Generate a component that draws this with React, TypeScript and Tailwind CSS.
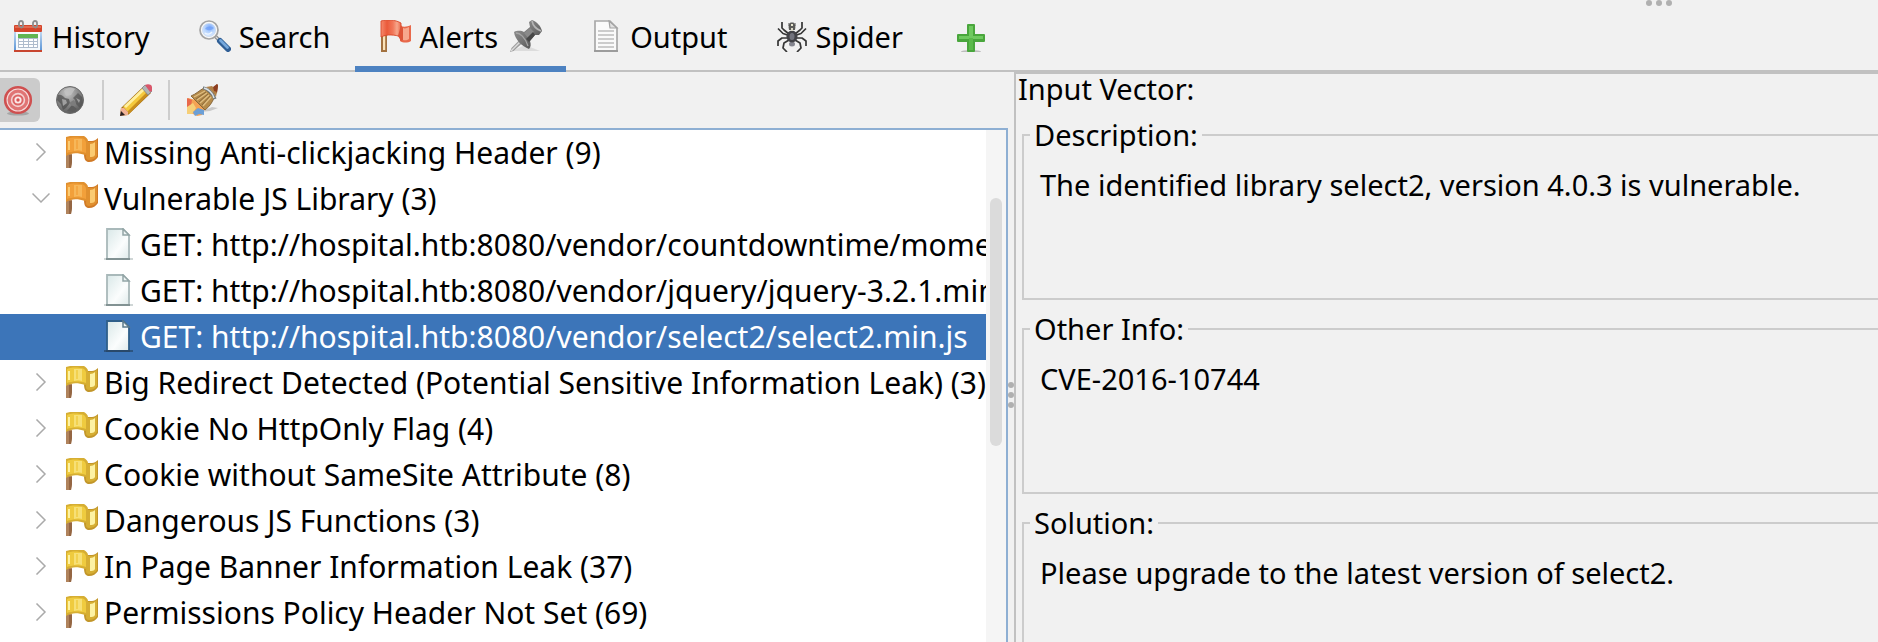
import { useState } from "react";
import type { ReactNode } from "react";

function Icon({ children }: { children: ReactNode }) {
  return (
    <svg viewBox="0 0 32 32" className="block size-8 shrink-0" aria-hidden="true">
      {children}
    </svg>
  );
}

function CalendarIcon() {
  return (
    <Icon>
      <defs>
        <linearGradient id="cal" x1="0" y1="0" x2="0" y2="1">
          <stop offset="0" stopColor="#c5dcf3" />
          <stop offset="1" stopColor="#5f97d6" />
        </linearGradient>
      </defs>
      <rect x="2" y="11" width="28" height="19" fill="url(#cal)" />
      <rect x="4" y="11" width="24" height="19" fill="#f6fafd" />
      <rect x="2" y="5" width="28" height="7" rx="1" fill="#d5452a" />
      <rect x="3" y="6" width="26" height="2" fill="#e2694f" />
      <rect x="2" y="30" width="28" height="2" fill="#c84630" />
      <rect x="6" y="14" width="20" height="4" fill="#62b552" />
      <rect x="6" y="18" width="20" height="10" fill="#aebccd" />
      <g fill="#fff">
        <rect x="7" y="19" width="4" height="2" />
        <rect x="12" y="19" width="4" height="2" />
        <rect x="17" y="19" width="4" height="2" />
        <rect x="22" y="19" width="3" height="2" />
        <rect x="7" y="22" width="4" height="2" />
        <rect x="12" y="22" width="4" height="2" />
        <rect x="17" y="22" width="4" height="2" />
        <rect x="22" y="22" width="3" height="2" />
        <rect x="7" y="25" width="4" height="2" />
        <rect x="12" y="25" width="4" height="2" />
        <rect x="17" y="25" width="4" height="2" />
        <rect x="22" y="25" width="3" height="2" />
      </g>
      <g fill="none" stroke="#8d8d8d" strokeWidth="1.8">
        <path d="M7 6.500V3a2 2 0 0 1 4 0v3a1.500 1.500 0 0 1-3 0" />
        <path d="M21 6.500V3a2 2 0 0 1 4 0v3a1.500 1.500 0 0 1-3 0" />
      </g>
    </Icon>
  );
}

function SearchIcon() {
  return (
    <Icon>
      <defs>
        <radialGradient id="lens" cx="0.55" cy="0.3" r="0.7">
          <stop offset="0" stopColor="#7fabfa" />
          <stop offset="0.5" stopColor="#b4d2fd" />
          <stop offset="1" stopColor="#dcebff" />
        </radialGradient>
      </defs>
      <path d="M16 16l4 4" stroke="#8b8b8b" strokeWidth="3.500" />
      <path d="M16 16l3.500 3.500" stroke="#d8d8d8" strokeWidth="1.200" />
      <path d="M21 21l8 8" stroke="#2f5e95" strokeWidth="6" strokeLinecap="round" />
      <path d="M21.500 20.500l7 7" stroke="#76a8dc" strokeWidth="2.800" strokeLinecap="round" />
      <circle cx="10" cy="10" r="9" fill="#f8f8f8" stroke="#a3a3a3" strokeWidth="1.700" />
      <circle cx="10" cy="10" r="6.600" fill="url(#lens)" stroke="#c3d4ec" strokeWidth="0.600" />
      <path d="M6 9c2-3 6-3 9-1-2 1-3 4-9 1z" fill="#6c9df6" opacity="0.700" />
      <path d="M6 13c2 1.500 5 1.500 7-1" stroke="#eef6ff" strokeWidth="1.500" fill="none" />
    </Icon>
  );
}

function RedFlagIcon() {
  return (
    <Icon>
      <defs>
        <linearGradient id="rf" x1="0" y1="0" x2="1" y2="0">
          <stop offset="0" stopColor="#f58a6c" />
          <stop offset="0.300" stopColor="#ea5a3a" />
          <stop offset="0.600" stopColor="#f1785a" />
          <stop offset="0.800" stopColor="#f6a78c" />
          <stop offset="1" stopColor="#ea6a4c" />
        </linearGradient>
      </defs>
      <path d="M2 13h6v19H2z" fill="#a2713f" />
      <path d="M4 16h2.200v14H4z" fill="#fbe3b8" />
      <path d="M21 6c4 1 7 1 11-1v16c-3 2-8 2-11 0z" fill="#e8694b" />
      <path d="M24 8c2 1 4 0 6-1v12c-2 1.500-4 1.500-6 1z" fill="#f7a88e" />
      <path d="M2 1C8-0.500 16-0.500 22 3v14C16 14.500 8 14 2 17z" fill="url(#rf)" stroke="#d9492a" strokeWidth="0.900" />
      <path d="M19 16l3 5 2-1V8l-2-3z" fill="#dd5438" />
    </Icon>
  );
}

function PinIcon() {
  return (
    <Icon>
      <defs>
        <linearGradient id="pin" x1="0" y1="0" x2="1" y2="1">
          <stop offset="0" stopColor="#9a9a9a" />
          <stop offset="0.500" stopColor="#757575" />
          <stop offset="1" stopColor="#404040" />
        </linearGradient>
      </defs>
      <path d="M2 31l13-6 15 6H2z" fill="#cfcfcf" opacity="0.600" />
      <path d="M0 32l1.500-4 8-8 3 3-9 8z" fill="#9b9b9b" />
      <path d="M1 31l9-9" stroke="#dcdcdc" strokeWidth="1.400" />
      <path d="M4 12c4-2 8-1 10 0l6-5-1-5 3-2c5 2 9 6 10 11l-3 4-4 0-5 6c1 3 1 6-1 8C12 26 5 20 4 12z" fill="url(#pin)" />
      <path d="M14 13l6-5 4 4-6 6z" fill="#8a8a8a" />
      <path d="M16 19l7-7 2 3-6 7z" fill="#474747" />
      <path d="M6 13c4 0 9 4 12 13" stroke="#a5a5a5" strokeWidth="1.300" fill="none" />
      <path d="M22 1c1 5 4 8 9 10" stroke="#b5b5b5" strokeWidth="1.600" fill="none" />
    </Icon>
  );
}

function OutputIcon() {
  return (
    <Icon>
      <path d="M5 1h15l7 7v23H5z" fill="#fafafa" stroke="#a9a9a9" strokeWidth="1.700" />
      <path d="M4 31h24" stroke="#979797" strokeWidth="1.700" />
      <path d="M19 1l1 7h7z" fill="#e2e2e2" stroke="#a3a3a3" strokeWidth="1.200" />
      <path d="M8 11h16M8 15h16M8 19h16M8 23h16M8 27h16" stroke="#bdbdbd" strokeWidth="1.600" />
    </Icon>
  );
}

function SpiderIcon() {
  return (
    <Icon>
      <g fill="none" stroke="#363636" strokeWidth="1.700" strokeLinejoin="round">
        <path d="M14 14L9 10 7 8V2" />
        <path d="M20 14l5-4 2-2V2" />
        <path d="M14 15.500l-6-2-5-5" />
        <path d="M20 15.500l6-2 5-5" />
        <path d="M14 18H7l-4 3v5" />
        <path d="M20 18h7l4 3v5" />
        <path d="M14 20l-5 3-1 5 4 4" />
        <path d="M20 20l5 3 1 5-4 4" />
      </g>
      <ellipse cx="17" cy="24" rx="3" ry="2.500" fill="#84858f" />
      <ellipse cx="17" cy="16.500" rx="5.500" ry="6" fill="#424247" />
      <ellipse cx="17" cy="16.500" rx="2.500" ry="3.500" fill="#72737d" />
      <path d="M14 10c-1-4 0-6 1.500-7.500h3C20 4 21 6 20 10z" fill="#5b5b58" />
      <rect x="16" y="4" width="2" height="2" fill="#e9e7d2" />
      <rect x="16" y="8" width="2" height="3" fill="#d9d7c5" />
      <path d="M14 3v3M20 3v3" stroke="#555" strokeWidth="1" />
    </Icon>
  );
}

function PlusIcon() {
  return (
    <Icon>
      <ellipse cx="16" cy="31.500" rx="10" ry="1.500" fill="#bdbdbd" />
      <path d="M12 5a1 1 0 0 1 1-1h6a1 1 0 0 1 1 1v9h9a1 1 0 0 1 1 1v6a1 1 0 0 1-1 1h-9v9a1 1 0 0 1-1 1h-6a1 1 0 0 1-1-1v-9H3a1 1 0 0 1-1-1v-6a1 1 0 0 1 1-1h9z" fill="#49a63c" />
      <path d="M14 6h4v10h10v3H4v-3h10z" fill="#6fc95f" />
      <path d="M14 18h4v12h-4z" fill="#5aba4a" />
    </Icon>
  );
}

function TargetIcon() {
  return (
    <Icon>
      <ellipse cx="16" cy="29.500" rx="11" ry="2" fill="#a5a5a5" />
      <circle cx="16" cy="16" r="12.800" fill="#f6dada" stroke="#cf5050" strokeWidth="2.600" />
      <circle cx="16" cy="16" r="8.800" fill="#f4d2d2" stroke="#e07474" strokeWidth="3.200" />
      <circle cx="16" cy="16" r="4.600" fill="#fbe9e9" stroke="#dc6464" strokeWidth="2" />
      <circle cx="16" cy="16" r="1.700" fill="#d95353" />
    </Icon>
  );
}

function GlobeIcon() {
  return (
    <Icon>
      <defs>
        <radialGradient id="globe" cx="0.400" cy="0.250" r="0.750">
          <stop offset="0" stopColor="#c6c6c6" />
          <stop offset="0.550" stopColor="#8a8a8a" />
          <stop offset="1" stopColor="#5c5c5c" />
        </radialGradient>
      </defs>
      <circle cx="16" cy="16" r="13.500" fill="url(#globe)" stroke="#6a6a6a" strokeWidth="1" />
      <path d="M4 11c3-1 5 1 7 3l4 1 1 4-4 5-3 2-2-6-4-4z" fill="#4c4c4c" opacity="0.700" />
      <path d="M19 14l5-5 4 4 1 6-3 5-4-4-1-4z" fill="#525252" opacity="0.700" />
      <path d="M8 15l4 1 1 3-4 3z" fill="#a0a0a0" />
      <path d="M10 7c3-4 8-4 11-2l-4 6-5 1z" fill="#c2c2c2" opacity="0.800" />
      <path d="M13 27l5-6 5 4-4 3z" fill="#5c5c5c" />
      <path d="M22 14l4 2-1 3z" fill="#a0a0a0" />
      <path d="M15 19l5-3 2 4-4 2z" fill="#7c7c7c" />
    </Icon>
  );
}

function PencilIcon() {
  return (
    <Icon>
      <path d="M0 32l1-8L24 2l7 7L8 31z" fill="#a36f19" />
      <path d="M3 23L23 4l5 5L9 29z" fill="#f4c93d" />
      <path d="M4 22L23 4l2 2L6 24z" fill="#fff0a0" />
      <path d="M7 28L27 8l2 2L9 30z" fill="#c98f1e" />
      <path d="M0 32l1-8 3 0 4 4 0 3z" fill="#f1b296" />
      <path d="M0 32l1-5 4 4z" fill="#2b2020" />
      <path d="M22 4l3-3 7 6-4 4z" fill="#b0b5b6" stroke="#808688" strokeWidth="0.800" />
      <path d="M25 1c2-1 4-1 6 0 1 1 2 4 1 6l-2 1z" fill="#d9576b" />
    </Icon>
  );
}

function BroomIcon() {
  return (
    <Icon>
      <path d="M14 28l12-5 6 1-8 3z" fill="#c9c9c9" />
      <path d="M2 14l8 2 9 9-3 6-5 1-8-4-2-3z" fill="#f4a354" />
      <path d="M1 14l5 2-1 6-4 2z" fill="#e9694b" />
      <path d="M1 23l6-4 3 5-4 6H1z" fill="#f6cf78" />
      <path d="M7 28l5-4 6 2v5l-5-1-4 2z" fill="#6c9fd6" />
      <path d="M27 5l4-5 1 1-1 8-4 2z" fill="#92441f" />
      <path d="M5 12c5-2 9-6 13-8l10 10c-2 5-5 9-9 12z" fill="#b58b4b" stroke="#806033" strokeWidth="0.900" />
      <path d="M8 13L19 7M11 16l10-7M14 19l9-8M17 22l8-9" stroke="#dfbd80" strokeWidth="1.300" />
      <path d="M10 15l10-7M13 18l9-8M16 21l8-9" stroke="#856437" strokeWidth="0.800" />
      <path d="M17 4c4 0 10 5 12 11" stroke="#737c80" strokeWidth="3.200" fill="none" />
      <path d="M18 4c4 1 9 5 10 10" stroke="#dfe4e6" strokeWidth="1.400" fill="none" />
      <path d="M20 3l6-1 5 5-1 6c-2-4-6-8-10-10z" fill="#b08047" />
      <path d="M27 3l4-3 1 2-1 6-3-1z" fill="#8d3f20" />
    </Icon>
  );
}

function AlertFlagIcon({ level }: { level: "medium" | "low" }) {
  const c =
    level === "medium"
      ? { edge: "#e0902f", base: "#f2a03a", light: "#fbcb72", dark: "#d07a26" }
      : { edge: "#d6ae33", base: "#efcb3f", light: "#fdf2a4", dark: "#c2962a" };
  return (
    <Icon>
      <path d="M0 18h6v8l-1 6H0z" fill="#b0835c" />
      <path d="M3 19h3v7l-1 6H3z" fill="#946643" />
      <path d="M20 5h6c2 0 4-1 6-3v19c-2 3-5 5-9 5-3 0-5-2-5-8z" fill={c.dark} />
      <path d="M21 6h5c2 0 3-1 5-2v16c-2 3-5 4-8 4-2 0-3-1-3-3z" fill={c.edge} />
      <path d="M24 8c2 0 4-1 5-2v13c-1 2-3 2-5 2z" fill={c.light} />
      <path d="M0 1l4-1h14c2 1 4 3 4 5v13l-3 1c-6-2-11-2-14-1-2 0-3 1-5 2z" fill={c.edge} />
      <path d="M1 3c4-2 12-2 17 0 1 1 2 2 2 4v10c-6-2-14-2-19 0z" fill={c.base} />
      <path d="M8 3h8v12c-3-1-5-1-8 0z" fill={c.light} opacity="0.550" />
      <path d="M2 5h2v9H2z" fill={c.light} />
      <path d="M10 4h2v9h-2z" fill={c.base} opacity="0.700" />
    </Icon>
  );
}

function PageIcon({ selected }: { selected: boolean }) {
  const edge = selected ? "#2f5f8a" : "#a9b9ba";
  return (
    <Icon>
      <defs>
        <linearGradient id="page" x1="0" y1="0" x2="1" y2="1">
          <stop offset="0" stopColor="#d9e8e8" />
          <stop offset="0.600" stopColor="#fbfdfd" />
          <stop offset="1" stopColor="#dfeaea" />
        </linearGradient>
      </defs>
      <path d="M2 31h29" stroke={selected ? "#2c5480" : "#cfd6d6"} strokeWidth="2" />
      <path d="M5 1h16l6 6v24H5z" fill="url(#page)" stroke={edge} strokeWidth="1.800" />
      <path d="M4 31h24" stroke={selected ? "#29496b" : "#829293"} strokeWidth="2" />
      <path d="M21 1v6h6z" fill="#eef4f4" stroke={selected ? "#5c7b8c" : "#93a5a6"} strokeWidth="1.500" />
    </Icon>
  );
}

function Grip({ vertical = false }: { vertical?: boolean }) {
  return (
    <span className={vertical ? "flex flex-col gap-1" : "flex gap-1"}>
      {[0, 1, 2].map((i) => (
        <span key={i} className="size-1.5 rounded-full bg-[#b0b0b0]" />
      ))}
    </span>
  );
}

const tabs = [
  { name: "History", icon: <CalendarIcon />, pad: "pl-3 pr-6" },
  { name: "Search", icon: <SearchIcon />, pad: "px-[25px]" },
  { name: "Alerts", icon: <RedFlagIcon />, pad: "px-6", pinned: true },
  { name: "Output", icon: <OutputIcon />, pad: "px-6" },
  { name: "Spider", icon: <SpiderIcon />, pad: "px-6" },
];

type Alert = { title: string; level: "medium" | "low"; requests?: string[] };

const alerts: Alert[] = [
  { title: "Missing Anti-clickjacking Header (9)", level: "medium" },
  {
    title: "Vulnerable JS Library (3)",
    level: "medium",
    requests: [
      "GET: http://hospital.htb:8080/vendor/countdowntime/moment.min.js",
      "GET: http://hospital.htb:8080/vendor/jquery/jquery-3.2.1.min.js",
      "GET: http://hospital.htb:8080/vendor/select2/select2.min.js",
    ],
  },
  { title: "Big Redirect Detected (Potential Sensitive Information Leak) (3)", level: "low" },
  { title: "Cookie No HttpOnly Flag (4)", level: "low" },
  { title: "Cookie without SameSite Attribute (8)", level: "low" },
  { title: "Dangerous JS Functions (3)", level: "low" },
  { title: "In Page Banner Information Leak (37)", level: "low" },
  { title: "Permissions Policy Header Not Set (69)", level: "low" },
];

const details = [
  { label: "Description:", text: "The identified library select2, version 4.0.3 is vulnerable." },
  { label: "Other Info:", text: "CVE-2016-10744" },
  { label: "Solution:", text: "Please upgrade to the latest version of select2." },
];

function TabBar() {
  const [active, setActive] = useState("Alerts");
  return (
    <header className="flex h-[72px] shrink-0 border-b-2 border-[#c1c1c1]">
      <div role="tablist" className="flex h-[72px]">
        {tabs.map((t) => (
          <button
            key={t.name}
            role="tab"
            aria-selected={active === t.name}
            onClick={() => setActive(t.name)}
            className={`flex items-center gap-2 border-b-6 pt-1.5 whitespace-nowrap ${t.pad} ${
              active === t.name ? "border-[#4d82c1]" : "border-transparent"
            }`}
          >
            {t.icon}
            <span className="pt-0.5">{t.name}</span>
            {t.pinned && (
              <span className="pl-1">
                <PinIcon />
              </span>
            )}
          </button>
        ))}
        <button aria-label="Add tab" className="flex items-center px-7">
          <PlusIcon />
        </button>
      </div>
      <div className="mr-[206px] ml-auto">
        <Grip />
      </div>
    </header>
  );
}

function Toolbar() {
  return (
    <div className="flex h-14 shrink-0 items-center" role="toolbar">
      <button aria-label="Scope" aria-pressed="true" className="rounded-r-md bg-[#cbcbcb] py-1.5 pr-1.5 pl-0.5">
        <TargetIcon />
      </button>
      <button aria-label="Sites" className="ml-2 p-1.5">
        <GlobeIcon />
      </button>
      <span className="mx-2.5 h-10 w-0.5 bg-[#cdcdcd]" />
      <button aria-label="Edit" className="p-1.5">
        <PencilIcon />
      </button>
      <span className="mx-2.5 h-10 w-0.5 bg-[#cdcdcd]" />
      <button aria-label="Clear" className="p-1.5">
        <BroomIcon />
      </button>
    </div>
  );
}

function AlertTree() {
  const [selected, setSelected] = useState(alerts[1].requests![2]);
  return (
    <div className="flex min-h-0 flex-1 border-t-2 border-r-2 border-[#8eafd3] bg-white text-[30px]">
      <ul role="tree" className="min-w-0 flex-1 overflow-hidden">
        {alerts.map((a) => (
          <li key={a.title} role="treeitem" aria-expanded={!!a.requests}>
            <button className="flex h-[46px] w-full items-center gap-1.5 pb-0.5 pl-8 text-left whitespace-nowrap">
              <svg viewBox="0 0 18 18" className="mr-2.5 size-[18px] shrink-0" fill="none" stroke="#aaaaaa" strokeWidth="1.500" aria-hidden="true">
                <path d={a.requests ? "M0.500 4.500L9 13l8.500-8.500" : "M4.500 0.500L13 9l-8.500 8.500"} />
              </svg>
              <AlertFlagIcon level={a.level} />
              <span className="pt-0.5">{a.title}</span>
            </button>
            {a.requests && (
              <ul role="group">
                {a.requests.map((r) => (
                  <li key={r} role="treeitem" aria-selected={r === selected}>
                    <button
                      onClick={() => setSelected(r)}
                      className={`flex h-[46px] w-full items-center gap-1.5 overflow-hidden pb-0.5 pl-[102px] text-left whitespace-nowrap ${
                        r === selected ? "bg-[#3c75b9] text-white" : ""
                      }`}
                    >
                      <PageIcon selected={r === selected} />
                      <span className="pt-0.5">{r}</span>
                    </button>
                  </li>
                ))}
              </ul>
            )}
          </li>
        ))}
      </ul>
      <div className="w-5 shrink-0 bg-[#f5f5f5] px-1 pt-[68px]">
        <div className="h-[248px] rounded-full bg-[#dbdbdb]" />
      </div>
    </div>
  );
}

function DetailPanel() {
  return (
    <section className="min-w-0 border-t-2 border-l-2 border-[#c1c1c1]">
      <p className="mb-3 pl-0.5 leading-[30px]">Input Vector:</p>
      <div className="flex flex-col gap-2.5 pl-1.5">
        {details.map((d) => (
          <fieldset key={d.label} className="h-[184px] min-w-0 border-2 border-r-0 border-[#cccccc]">
            <legend className="ml-1.5 px-1">{d.label}</legend>
            <p className="px-4 pt-3">{d.text}</p>
          </fieldset>
        ))}
      </div>
    </section>
  );
}

export default function App() {
  return (
    <main className="flex h-screen flex-col overflow-hidden bg-[#f1f1f1] font-['Noto_Sans',sans-serif] text-[29px] leading-[38px] text-black">
      <TabBar />
      <div className="grid min-h-0 flex-1 grid-cols-[minmax(0,1008fr)_6px_minmax(0,864fr)] grid-rows-[minmax(0,1fr)]">
        <div className="flex min-h-0 flex-col">
          <Toolbar />
          <AlertTree />
        </div>
        <div className="pt-[310px]">
          <Grip vertical />
        </div>
        <DetailPanel />
      </div>
    </main>
  );
}
